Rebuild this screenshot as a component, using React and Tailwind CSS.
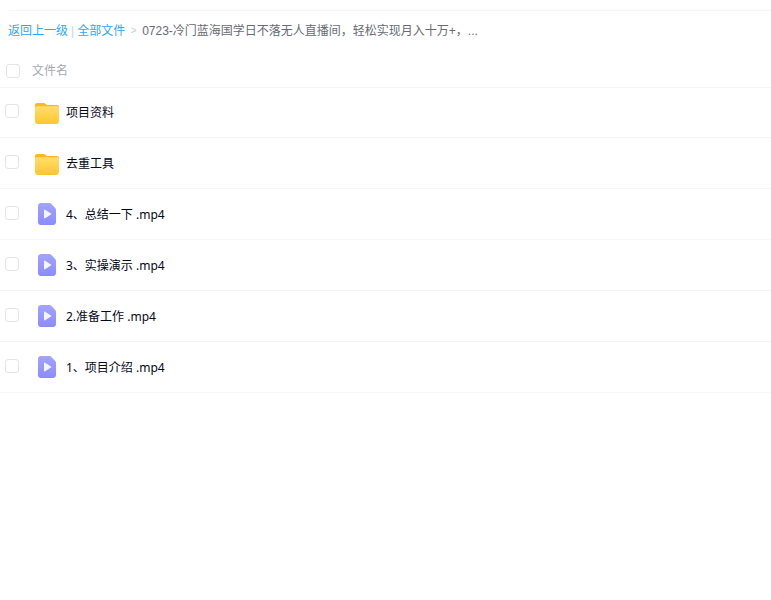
const font = { fontFamily: '"Liberation Sans", "Noto Sans CJK SC", sans-serif' };
const rowFont = { fontFamily: '"Noto Sans", "Noto Sans CJK SC", sans-serif' };

const files = [
    { name: '项目资料', type: 'folder' },
    { name: '去重工具', type: 'folder' },
    { name: '4、总结一下 .mp4', type: 'video' },
    { name: '3、实操演示 .mp4', type: 'video' },
    { name: '2.准备工作 .mp4', type: 'video' },
    { name: '1、项目介绍 .mp4', type: 'video' },
];

const FolderIcon = () => (
    <svg width="24" height="21" viewBox="0 0 24 21" className="block">
        <defs>
            <linearGradient id="folderFront" x1="0" y1="0" x2="0" y2="1">
                <stop offset="0" stopColor="#ffdf6a" />
                <stop offset="1" stopColor="#ffc52f" />
            </linearGradient>
        </defs>
        <path d="M2 0h6.500c1 0 1.600.4 2.200 1.100L12 2h10c1.100 0 2 .9 2 2v4H0V2C0 .9.9 0 2 0z" fill="#ffb81f" />
        <path d="M2 3.300h20c1.100 0 2 .9 2 2V18c0 1.700-1.300 3-3 3H3c-1.700 0-3-1.300-3-3V5.300c0-1.100.9-2 2-2z" fill="url(#folderFront)" />
    </svg>
);

const VideoIcon = () => (
    <svg width="18" height="22" viewBox="0 0 18 22" className="block -mt-[2px]">
        <defs>
            <linearGradient id="videoBody" x1="0" y1="0" x2="0" y2="1">
                <stop offset="0" stopColor="#a3a3ff" />
                <stop offset="1" stopColor="#8a8cff" />
            </linearGradient>
        </defs>
        <path d="M3 0h8.500c.6 0 1.100.2 1.500.6l4.400 4.600c.4.4.6.9.6 1.400V19c0 1.700-1.300 3-3 3H3c-1.700 0-3-1.300-3-3V3c0-1.700 1.300-3 3-3z" fill="url(#videoBody)" />
        <path d="M6 7.300c0-.5.600-.9 1.100-.6l5.800 3.700c.5.300.5.900 0 1.200l-5.800 3.700c-.5.300-1.100-.1-1.100-.6z" fill="#ffffff" fillOpacity="0.9" />
    </svg>
);

const Checkbox = () => (
    <span className="block w-[14px] h-[14px] rounded-[3px] border border-[#e3e4e6] bg-white" />
);

const App = () => {
    return (
        <div className="w-[771px] h-[600px] bg-white overflow-hidden" style={font}>
            <div className="ml-[9px] mt-[10px] border-t border-[#f5f6f8]" />

            {/* Breadcrumb */}
            <div className="flex items-center h-[39px] pl-2 text-xs text-[#666b75]">
                <span className="text-[#2ea7ff]">返回上一级</span>
                <span className="mx-[3px] text-[#b5d9f5]">|</span>
                <span className="text-[#2ea7ff]">全部文件</span>
                <span className="w-[17px] text-center text-[10px] text-[#c9ccd2]">&gt;</span>
                <span>0723-冷门蓝海国学日不落无人直播间，轻松实现月入十万+，...</span>
            </div>

            {/* Header */}
            <div className="flex items-center h-[38px] pt-[5px] pl-[6px] border-b border-[#f3f4f6] text-xs text-[#a5a9b3]">
                <Checkbox />
                <span className="ml-3">文件名</span>
            </div>

            {/* File rows */}
            {files.map((file, i) => (
                <div
                    key={file.name}
                    className={i === 0
                        ? 'flex items-center h-[50px] pt-[1px] pl-[5px] border-b border-[#f3f5f8]'
                        : 'flex items-center h-[51px] pt-[2px] pl-[5px] border-b border-[#f3f5f8]'}
                >
                    <div className="-translate-y-[2px]"><Checkbox /></div>
                    <div className="w-[24px] ml-4 flex justify-center">
                        {file.type === 'folder' ? <FolderIcon /> : <VideoIcon />}
                    </div>
                    <span className="ml-[7px] text-xs text-[#03081a]" style={rowFont}>{file.name}</span>
                </div>
            ))}
        </div>
    );
};

export default App;
